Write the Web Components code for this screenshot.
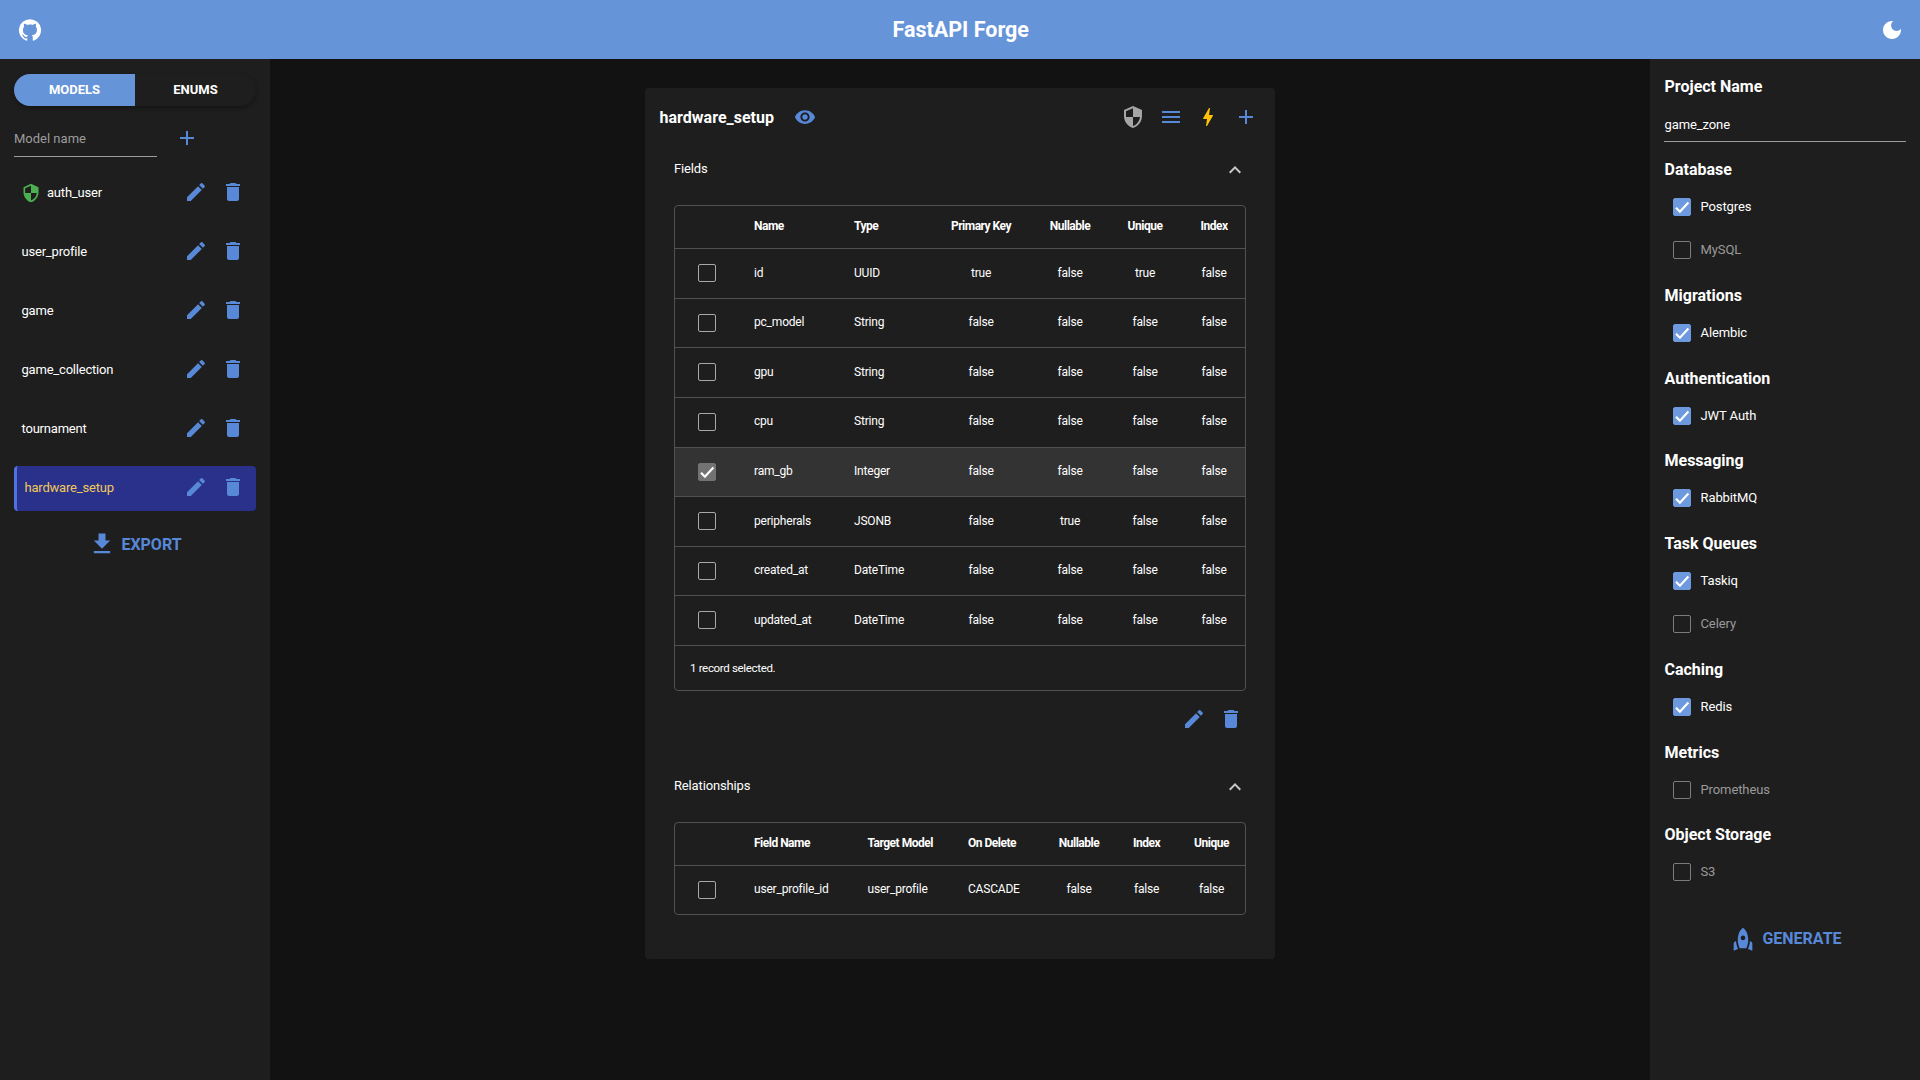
<!DOCTYPE html>
<html lang="en">
<head>
  <meta charset="UTF-8">
  <title>FastAPI Forge</title>
  <style>
    html, body {
      margin: 0;
      height: 100%;
      background: #121212;
      color: #fff;
      font-family: Roboto, "Liberation Sans", sans-serif;
    }
  </style>
</head>
<body>
  <forge-app></forge-app>
  <script>
    const ICONS = {
      github: 'M12 1.27a11 11 0 00-3.48 21.46c.55.09.73-.28.73-.55v-1.84c-3.03.64-3.67-1.46-3.67-1.46-.55-1.29-1.28-1.65-1.28-1.65-.92-.65.1-.65.1-.65 1.1 0 1.73 1.1 1.73 1.1.92 1.65 2.57 1.2 3.21.92a2 2 0 01.64-1.47c-2.47-.27-5.04-1.19-5.04-5.5 0-1.1.46-2.1 1.2-2.84a3.76 3.76 0 010-2.93s.91-.27 3.11 1.1c1.8-.49 3.7-.49 5.5 0 2.1-1.38 3.02-1.1 3.02-1.1a3.76 3.76 0 010 2.93c.83.74 1.2 1.74 1.2 2.94 0 4.21-2.57 5.13-5.04 5.4.45.37.82.92.82 2.02v3.03c0 .27.1.64.73.55A11 11 0 0012 1.27',
      moon: 'M12 3c-4.97 0-9 4.03-9 9s4.03 9 9 9 9-4.03 9-9c0-.46-.04-.92-.1-1.36-.98 1.37-2.58 2.26-4.4 2.26-2.98 0-5.4-2.42-5.4-5.4 0-1.81.89-3.42 2.26-4.4-.44-.06-.9-.1-1.36-.1z',
      edit: 'M3 17.25V21h3.75L17.81 9.94l-3.75-3.75L3 17.25zM20.71 7.04c.39-.39.39-1.02 0-1.41l-2.34-2.34a.9959.9959 0 0 0-1.41 0l-1.83 1.83 3.75 3.75 1.83-1.83z',
      trash: 'M6 19c0 1.1.9 2 2 2h8c1.1 0 2-.9 2-2V7H6v12zM19 4h-3.5l-1-1h-5l-1 1H5v2h14V4z',
      add: 'M19 13h-6v6h-2v-6H5v-2h6V5h2v6h6v2z',
      shield: 'M12 1L3 5v6c0 5.55 3.84 10.74 9 12 5.16-1.26 9-6.45 9-12V5l-9-4zm0 10.99h7c-.53 4.12-3.28 7.79-7 8.94V12H5V6.3l7-3.11v8.8z',
      menu: 'M3 18h18v-2H3v2zm0-5h18v-2H3v2zm0-7v2h18V6H3z',
      bolt: 'M11 21h-1l1-7H7.5c-.58 0-.57-.32-.38-.66.19-.34.05-.08.07-.12C8.48 10.94 10.42 7.54 13 3h1l-1 7h3.5c.49 0 .56.33.47.51l-.07.15C12.96 17.55 11 21 11 21z',
      eye: 'M12 4.5C7 4.5 2.73 7.61 1 12c1.73 4.39 6 7.5 11 7.5s9.27-3.11 11-7.5c-1.73-4.39-6-7.5-11-7.5zM12 17c-2.76 0-5-2.24-5-5s2.24-5 5-5 5 2.24 5 5-2.24 5-5 5zm0-8c-1.66 0-3 1.34-3 3s1.34 3 3 3 3-1.34 3-3-1.34-3-3-3z',
      less: 'M12 8l-6 6 1.41 1.41L12 10.83l4.59 4.58L18 14z',
      download: 'M5 20h14v-2H5v2zM19 9h-4V3H9v6H5l7 7 7-7z',
      rocket: 'M12 2.5s4.5 2.04 4.5 10.5c0 2.49-1.04 5.57-1.6 7H9.1c-.56-1.43-1.6-4.51-1.6-7C7.5 4.54 12 2.5 12 2.5zm2 8.5c0-1.1-.9-2-2-2s-2 .9-2 2 .9 2 2 2 2-.9 2-2zm-6.31 9.52c-.48-1.23-1.52-4.17-1.67-6.87l-1.13.75c-.56.38-.89 1-.89 1.67V22l3.69-1.48zM20 22v-5.93c0-.67-.33-1.29-.89-1.66l-1.13-.75c-.15 2.69-1.2 5.64-1.67 6.87L20 22z'
    }

    class UiIcon extends HTMLElement {
      constructor() {
        super()
        this.attachShadow({mode: 'open'})
      }
      connectedCallback() {
        const size = this.getAttribute('size') || 24
        const color = this.getAttribute('color') || '#5888d8'
        this.shadowRoot.innerHTML = `
          <style>
            :host { display: inline-flex; flex: none; width: ${size}px; height: ${size}px; color: ${color}; }
            svg { width: 100%; height: 100%; display: block; fill: currentColor; }
          </style>
          <svg viewBox="0 0 24 24"><path d="${ICONS[this.getAttribute('name')]}"></path></svg>
        `
      }
    }
    customElements.define('ui-icon', UiIcon)

    class UiCheck extends HTMLElement {
      constructor() {
        super()
        this.attachShadow({mode: 'open'})
      }
      connectedCallback() {
        const on = this.hasAttribute('checked')
        const fill = this.getAttribute('fill') || '#6d99de'
        const line = this.getAttribute('line') || '#7c7c7c'
        this.shadowRoot.innerHTML = `
          <style>
            :host { display: inline-flex; flex: none; width: 18px; height: 18px; }
            .box { box-sizing: border-box; width: 18px; height: 18px; border-radius: 2px; border: 1px solid ${line}; }
            .on { background: ${fill}; border-color: ${fill}; }
            svg { display: block; margin: -1px; width: 18px; height: 18px; fill: none; stroke: #fff; stroke-width: 2.2; }
          </style>
          <div class="box ${on ? 'on' : ''}">${on ? '<svg viewBox="0 0 18 18"><path d="M3 9.8l3.9 3.9L15.4 4.6"></path></svg>' : ''}</div>
        `
      }
    }
    customElements.define('ui-check', UiCheck)

    class AppBar extends HTMLElement {
      constructor() {
        super()
        this.attachShadow({mode: 'open'}).innerHTML = `
          <style>
            :host {
              display: flex;
              align-items: center;
              justify-content: space-between;
              height: 59px;
              padding: 0 16.5px 0 18px;
              background: #6694d9;
              box-sizing: border-box;
            }
            h1 { margin: 0; font-size: 21.5px; font-weight: 700; color: #fff; }
          </style>
          <ui-icon name="github" size="24" color="#fff"></ui-icon>
          <h1>FastAPI Forge</h1>
          <ui-icon name="moon" size="24" color="#fff"></ui-icon>
        `
      }
    }
    customElements.define('app-bar', AppBar)

    class ModelItem extends HTMLElement {
      constructor() {
        super()
        this.attachShadow({mode: 'open'})
      }
      connectedCallback() {
        const auth = this.hasAttribute('auth')
        this.shadowRoot.innerHTML = `
          <style>
            :host {
              display: flex;
              align-items: center;
              height: 45px;
              box-sizing: border-box;
              padding: 0 11px 0 7.5px;
              border-radius: 4px;
              font-size: 13px;
              letter-spacing: -.2px;
              color: #fff;
            }
            :host([selected]) {
              background: #2a318a;
              border-left: 3px solid #4f72e3;
              padding-left: 7.5px;
              color: #f0c95c;
            }
            .name { flex: 1; display: flex; align-items: center; gap: 6.5px; margin-top: -2px; }
            .tools { display: flex; gap: 13.4px; margin-top: -3px; }
            .shield { margin-left: -1px; margin-top: 1px; }
          </style>
          <div class="name">
            ${auth ? '<ui-icon class="shield" name="shield" size="20" color="#4caf50"></ui-icon>' : ''}
            <slot></slot>
          </div>
          <div class="tools">
            <ui-icon name="edit"></ui-icon>
            <ui-icon name="trash"></ui-icon>
          </div>
        `
      }
    }
    customElements.define('model-item', ModelItem)

    class ActionButton extends HTMLElement {
      constructor() {
        super()
        this.attachShadow({mode: 'open'})
      }
      connectedCallback() {
        this.shadowRoot.innerHTML = `
          <style>
            :host {
              display: flex;
              align-items: center;
              justify-content: center;
              gap: 5px;
              height: 34px;
              color: #5888d8;
              font-size: 16px;
              font-weight: 700;
            }
          </style>
          <ui-icon name="${this.getAttribute('icon')}" size="28"></ui-icon>
          <slot></slot>
        `
      }
    }
    customElements.define('action-button', ActionButton)

    class ModelSidebar extends HTMLElement {
      constructor() {
        super()
        this.attachShadow({mode: 'open'}).innerHTML = `
          <style>
            :host {
              display: block;
              box-sizing: border-box;
              padding: 15px 14px 0;
              background: #1e1e1e;
            }
            .tabs {
              display: flex;
              height: 32px;
              border-radius: 16px;
              overflow: hidden;
              font-size: 13px;
              font-weight: 700;
              box-shadow: 0 2px 4px rgba(0, 0, 0, .35);
            }
            .tab { width: 50%; box-sizing: border-box; display: flex; align-items: center; justify-content: center; color: #fff; padding-bottom: 1px; }
            .tab.on { background: #6694d9; }
            .add { display: flex; align-items: center; margin-top: 14px; height: 37px; }
            .field {
              box-sizing: border-box;
              width: 143px;
              height: 37px;
              padding-top: 11px;
              border-bottom: 1px solid #9c9c9c;
              font-size: 13px;
              color: #9c9c9c;
            }
            .add ui-icon { margin-left: 18px; margin-top: -1px; }
            .list { display: flex; flex-direction: column; gap: 14px; margin-top: 14px; }
            action-button { margin-top: 16px; }
          </style>
          <div class="tabs">
            <div class="tab on">MODELS</div>
            <div class="tab">ENUMS</div>
          </div>
          <div class="add">
            <div class="field">Model name</div>
            <ui-icon name="add"></ui-icon>
          </div>
          <div class="list">
            <model-item auth>auth_user</model-item>
            <model-item>user_profile</model-item>
            <model-item>game</model-item>
            <model-item>game_collection</model-item>
            <model-item>tournament</model-item>
            <model-item selected>hardware_setup</model-item>
          </div>
          <action-button icon="download">EXPORT</action-button>
        `
      }
    }
    customElements.define('model-sidebar', ModelSidebar)

    class DataTable extends HTMLElement {
      constructor() {
        super()
        this.attachShadow({mode: 'open'})
      }
      connectedCallback() {
        const cols = JSON.parse(this.getAttribute('columns'))
        const rows = JSON.parse(this.getAttribute('rows'))
        const selected = Number(this.getAttribute('selected') ?? -1)
        const footer = this.getAttribute('footer')
        const tracks = '63px ' + cols.map(c => c.w + 'px').join(' ')
        const cell = (text, i) => `<div class="cell ${cols[i].c ? 'center' : ''}">${text}</div>`
        this.shadowRoot.innerHTML = `
          <style>
            :host {
              display: block;
              box-sizing: border-box;
              border: 1px solid #515151;
              border-radius: 4px;
              font-size: 12px;
              letter-spacing: -.2px;
              color: #fff;
            }
            .row {
              display: grid;
              grid-template-columns: ${tracks};
              align-items: center;
              box-sizing: border-box;
              height: 49.625px;
              border-bottom: 1px solid #515151;
            }
            .row.head { height: 43px; font-weight: 700; letter-spacing: -.5px; }
            .row.sel { background: #333; }
            .row.last { border-bottom: 0; height: 48px; }
            .check { display: flex; justify-content: center; margin-top: -.5px; }
            .cell { padding-left: 16px; white-space: nowrap; margin-top: -1.5px; }
            .center { padding-left: 0; text-align: center; }
            .foot { height: 45px; display: flex; align-items: center; padding-left: 15px; font-size: 11.5px; letter-spacing: -.33px; margin-top: -1px; }
          </style>
          <div class="row head"><div></div>${cols.map((c, i) => cell(c.t, i)).join('')}</div>
          ${rows.map((r, n) => `
            <div class="row ${n === selected ? 'sel' : ''} ${!footer && n === rows.length - 1 ? 'last' : ''}">
              <div class="check"><ui-check line="#a8a8a8" fill="#737373" ${n === selected ? 'checked' : ''}></ui-check></div>
              ${r.map(cell).join('')}
            </div>`).join('')}
          ${footer ? `<div class="foot">${footer}</div>` : ''}
        `
      }
    }
    customElements.define('data-table', DataTable)

    class FoldSection extends HTMLElement {
      constructor() {
        super()
        this.attachShadow({mode: 'open'})
      }
      connectedCallback() {
        this.shadowRoot.innerHTML = `
          <style>
            :host { display: block; padding: 0 29px 0 29px; }
            .head {
              display: flex;
              align-items: center;
              justify-content: space-between;
              height: 24px;
              margin-bottom: 23px;
              font-size: 13px;
              letter-spacing: -.15px;
              color: #fff;
            }
            .title { margin-top: -4px; }
            ui-icon { margin-right: -1px; }
          </style>
          <div class="head">
            <div class="title">${this.getAttribute('label')}</div>
            <ui-icon name="less" color="#c9c9c9"></ui-icon>
          </div>
          <slot></slot>
        `
      }
    }
    customElements.define('fold-section', FoldSection)

    const FIELD_COLS = [
      {t: 'Name', w: 100}, {t: 'Type', w: 91}, {t: 'Primary Key', w: 104, c: 1},
      {t: 'Nullable', w: 74, c: 1}, {t: 'Unique', w: 76, c: 1}, {t: 'Index', w: 62, c: 1}
    ]
    const FIELD_ROWS = [
      ['id', 'UUID', 'true', 'false', 'true', 'false'],
      ['pc_model', 'String', 'false', 'false', 'false', 'false'],
      ['gpu', 'String', 'false', 'false', 'false', 'false'],
      ['cpu', 'String', 'false', 'false', 'false', 'false'],
      ['ram_gb', 'Integer', 'false', 'false', 'false', 'false'],
      ['peripherals', 'JSONB', 'false', 'true', 'false', 'false'],
      ['created_at', 'DateTime', 'false', 'false', 'false', 'false'],
      ['updated_at', 'DateTime', 'false', 'false', 'false', 'false']
    ]
    const REL_COLS = [
      {t: 'Field Name', w: 113.5}, {t: 'Target Model', w: 100.5}, {t: 'On Delete', w: 91},
      {t: 'Nullable', w: 72, c: 1}, {t: 'Index', w: 63, c: 1}, {t: 'Unique', w: 67, c: 1}
    ]
    const REL_ROWS = [['user_profile_id', 'user_profile', 'CASCADE', 'false', 'false', 'false']]
    const attr = v => JSON.stringify(v).replace(/"/g, '&quot;')

    class ModelCard extends HTMLElement {
      constructor() {
        super()
        this.attachShadow({mode: 'open'}).innerHTML = `
          <style>
            :host {
              display: block;
              box-sizing: border-box;
              width: 630px;
              padding: 17px 0 44px;
              background: #1e1e1e;
              border-radius: 4px;
            }
            .top { display: flex; align-items: center; height: 24px; padding: 0 17px 0 14.5px; margin-bottom: 29px; }
            h2 { margin: 0; font-size: 16px; font-weight: 700; color: #fff; letter-spacing: .02px; }
            .eye { margin-left: 20px; margin-top: -1px; }
            .tools { margin-left: auto; display: flex; gap: 13.6px; }
            .actions { display: flex; justify-content: flex-end; gap: 13.4px; padding-right: 3px; margin: 16px 0 44px; }
          </style>
          <div class="top">
            <h2>hardware_setup</h2>
            <ui-icon class="eye" name="eye" size="22"></ui-icon>
            <div class="tools">
              <ui-icon name="shield" color="#a6a6a6"></ui-icon>
              <ui-icon name="menu"></ui-icon>
              <ui-icon name="bolt" color="#ffc107"></ui-icon>
              <ui-icon name="add"></ui-icon>
            </div>
          </div>
          <fold-section label="Fields">
            <data-table columns="${attr(FIELD_COLS)}" rows="${attr(FIELD_ROWS)}" selected="4" footer="1 record selected."></data-table>
            <div class="actions">
              <ui-icon name="edit"></ui-icon>
              <ui-icon name="trash"></ui-icon>
            </div>
          </fold-section>
          <fold-section label="Relationships">
            <data-table columns="${attr(REL_COLS)}" rows="${attr(REL_ROWS)}"></data-table>
          </fold-section>
        `
      }
    }
    customElements.define('model-card', ModelCard)

    class OptionGroup extends HTMLElement {
      constructor() {
        super()
        this.attachShadow({mode: 'open'})
      }
      connectedCallback() {
        const opts = this.getAttribute('options').split(',')
        this.shadowRoot.innerHTML = `
          <style>
            :host { display: block; padding-bottom: 13.75px; }
            h3 { margin: 0 0 6px -.5px; height: 20px; line-height: 20px; font-size: 16px; font-weight: 700; color: #fff; }
            .opt { display: flex; align-items: center; gap: 9.5px; height: 43px; padding-left: 8px; font-size: 13px; letter-spacing: -.1px; color: #9a9a9a; }
            .opt.on { color: #fff; }
            .opt span { margin-top: -2px; }
            ui-check { margin-top: -1px; }
          </style>
          <h3>${this.getAttribute('label')}</h3>
          ${opts.map(o => {
            const on = o.startsWith('*')
            return `<div class="opt ${on ? 'on' : ''}"><ui-check ${on ? 'checked' : ''}></ui-check><span>${o.replace('*', '')}</span></div>`
          }).join('')}
        `
      }
    }
    customElements.define('option-group', OptionGroup)

    class ConfigSidebar extends HTMLElement {
      constructor() {
        super()
        this.attachShadow({mode: 'open'}).innerHTML = `
          <style>
            :host {
              display: block;
              box-sizing: border-box;
              padding: 18px 14px 0 15px;
              background: #1e1e1e;
            }
            h3 { margin: 0 0 0 -.5px; height: 20px; line-height: 20px; font-size: 16px; font-weight: 700; color: #fff; }
            .field {
              box-sizing: border-box;
              height: 45px;
              margin: 0 0 18.2px -1px;
              padding: 20px 0 0 .5px;
              border-bottom: 1px solid #9c9c9c;
              font-size: 13px;
              letter-spacing: -.1px;
              color: #fff;
            }
            action-button { margin-top: 13.5px; }
          </style>
          <h3>Project Name</h3>
          <div class="field">game_zone</div>
          <option-group label="Database" options="*Postgres,MySQL"></option-group>
          <option-group label="Migrations" options="*Alembic"></option-group>
          <option-group label="Authentication" options="*JWT Auth"></option-group>
          <option-group label="Messaging" options="*RabbitMQ"></option-group>
          <option-group label="Task Queues" options="*Taskiq,Celery"></option-group>
          <option-group label="Caching" options="*Redis"></option-group>
          <option-group label="Metrics" options="Prometheus"></option-group>
          <option-group label="Object Storage" options="S3"></option-group>
          <action-button icon="rocket">GENERATE</action-button>
        `
      }
    }
    customElements.define('config-sidebar', ConfigSidebar)

    class ForgeApp extends HTMLElement {
      constructor() {
        super()
        this.attachShadow({mode: 'open'}).innerHTML = `
          <style>
            :host { display: flex; flex-direction: column; height: 100vh; overflow: hidden; }
            .body { flex: 1; display: grid; grid-template-columns: 270px 1fr 270px; min-height: 0; }
            main { display: flex; justify-content: center; align-items: flex-start; padding-top: 29px; }
          </style>
          <app-bar></app-bar>
          <div class="body">
            <model-sidebar></model-sidebar>
            <main><model-card></model-card></main>
            <config-sidebar></config-sidebar>
          </div>
        `
      }
    }
    customElements.define('forge-app', ForgeApp)
  </script>
</body>
</html>
